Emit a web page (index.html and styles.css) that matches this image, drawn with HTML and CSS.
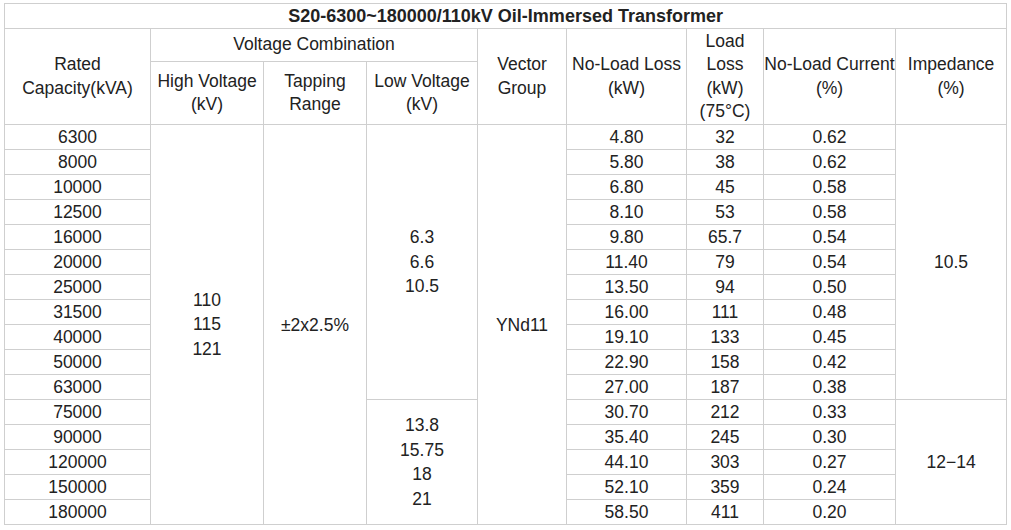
FILE: index.html
```html
<!DOCTYPE html>
<html>
<head>
<meta charset="utf-8">
<link rel="stylesheet" href="styles.css">
</head>
<body>
<div class="wrap">
<table class="spec">
<colgroup>
<col class="c1"><col class="c2"><col class="c3"><col class="c4"><col class="c5"><col class="c6"><col class="c7"><col class="c8"><col class="c9">
</colgroup>
<thead>
<tr class="title"><th colspan="9">S20-6300~180000/110kV Oil-Immersed Transformer</th></tr>
<tr class="h1">
<th rowspan="2">Rated<br>Capacity(kVA)</th>
<th colspan="3">Voltage Combination</th>
<th rowspan="2">Vector<br>Group</th>
<th rowspan="2">No-Load Loss<br>(kW)</th>
<th rowspan="2">Load<br>Loss<br>(kW)<br>(75°C)</th>
<th rowspan="2">No-Load Current<br>(%)</th>
<th rowspan="2">Impedance<br>(%)</th>
</tr>
<tr class="h2">
<th>High Voltage<br>(kV)</th>
<th>Tapping<br>Range</th>
<th>Low Voltage<br>(kV)</th>
</tr>
</thead>
<tbody>
<tr><td>6300</td><td rowspan="16" class="multi">110<br>115<br>121</td><td rowspan="16">±2x2.5%</td><td rowspan="11" class="multi">6.3<br>6.6<br>10.5</td><td rowspan="16">YNd11</td><td>4.80</td><td>32</td><td>0.62</td><td rowspan="11">10.5</td></tr>
<tr><td>8000</td><td>5.80</td><td>38</td><td>0.62</td></tr>
<tr><td>10000</td><td>6.80</td><td>45</td><td>0.58</td></tr>
<tr><td>12500</td><td>8.10</td><td>53</td><td>0.58</td></tr>
<tr><td>16000</td><td>9.80</td><td>65.7</td><td>0.54</td></tr>
<tr><td>20000</td><td>11.40</td><td>79</td><td>0.54</td></tr>
<tr><td>25000</td><td>13.50</td><td>94</td><td>0.50</td></tr>
<tr><td>31500</td><td>16.00</td><td>111</td><td>0.48</td></tr>
<tr><td>40000</td><td>19.10</td><td>133</td><td>0.45</td></tr>
<tr><td>50000</td><td>22.90</td><td>158</td><td>0.42</td></tr>
<tr><td>63000</td><td>27.00</td><td>187</td><td>0.38</td></tr>
<tr><td>75000</td><td rowspan="5" class="multi">13.8<br>15.75<br>18<br>21</td><td>30.70</td><td>212</td><td>0.33</td><td rowspan="5">12−14</td></tr>
<tr><td>90000</td><td>35.40</td><td>245</td><td>0.30</td></tr>
<tr><td>120000</td><td>44.10</td><td>303</td><td>0.27</td></tr>
<tr><td>150000</td><td>52.10</td><td>359</td><td>0.24</td></tr>
<tr><td>180000</td><td>58.50</td><td>411</td><td>0.20</td></tr>
</tbody>
</table>
</div>
</body>
</html>
```
FILE: styles.css
```css
html, body {
  margin: 0;
  padding: 0;
  background: #fff;
}
.wrap {
  padding: 3px 0 0 4px;
}
.spec {
  border-collapse: collapse;
  table-layout: fixed;
  width: 1003px;
  font-family: "Liberation Sans", Arial, sans-serif;
  font-size: 17.5px;
  color: #222;
}
.c1 { width: 146px; }
.c2 { width: 113px; }
.c3 { width: 103px; }
.c4 { width: 111px; }
.c5 { width: 89px; }
.c6 { width: 120px; }
.c7 { width: 77px; }
.c8 { width: 132px; }
.c9 { width: 111px; }
.spec th, .spec td {
  border: 1px solid #cfcfcf;
  padding: 0;
  text-align: center;
  vertical-align: middle;
  font-weight: normal;
  white-space: nowrap;
  overflow: hidden;
}
.spec .title th {
  height: 24px;
  font-size: 18px;
  font-weight: bold;
  line-height: 24px;
}
.spec .h1 th {
  height: 32px;
  line-height: 23.5px;
}
.spec .h2 th {
  height: 62px;
  line-height: 23.5px;
}
.spec td {
  height: 24px;
  line-height: 24px;
}
.spec td.multi {
  line-height: 24.5px;
}
```
